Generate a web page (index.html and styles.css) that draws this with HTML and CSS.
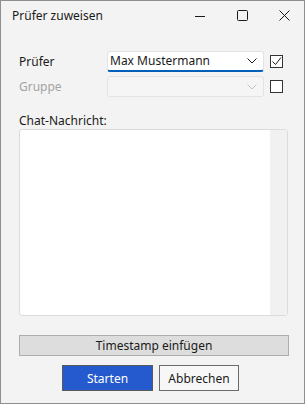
FILE: index.html
```html
<!DOCTYPE html>
<html lang="de">
<head>
    <meta charset="UTF-8">
    <meta name="viewport" content="width=device-width, initial-scale=1.0">
    <title>Prüfer zuweisen</title>
    <link rel="stylesheet" href="styles.css">
</head>
<body>

<div class="window">

    <!-- Titelleiste -->
    <div class="titlebar">
        <span class="title">Prüfer zuweisen</span>
        <div class="controls">
            <span class="ctrl">
                <svg width="10" height="10" viewBox="0 0 10 10"><path d="M0 5.5h10" stroke="#1a1a1a" stroke-width="1"/></svg>
            </span>
            <span class="ctrl">
                <svg width="11" height="11" viewBox="0 0 11 11"><rect x="0.5" y="0.5" width="10" height="10" rx="1" fill="none" stroke="#1a1a1a" stroke-width="1"/></svg>
            </span>
            <span class="ctrl">
                <svg width="11" height="11" viewBox="0 0 11 11"><path d="M0.5 0.5l10 10M10.5 0.5l-10 10" stroke="#1a1a1a" stroke-width="1"/></svg>
            </span>
        </div>
    </div>

    <div class="content">

        <div class="formgrid">
            <label class="label">Prüfer</label>
            <div class="combo">
                <span class="comboText">Max Mustermann</span>
                <svg class="chevron" width="10" height="6" viewBox="0 0 10 6"><path d="M0.5 0.5l4.5 4.5 4.5-4.5" fill="none" stroke="#1a1a1a" stroke-width="1"/></svg>
            </div>
            <span class="check checked">
                <svg width="11" height="11" viewBox="0 0 11 11"><path d="M1.5 5.5l3 3 5.5-7" fill="none" stroke="#1a1a1a" stroke-width="1"/></svg>
            </span>

            <label class="label disabled">Gruppe</label>
            <div class="combo comboDisabled">
                <span class="comboText"></span>
                <svg class="chevron" width="10" height="6" viewBox="0 0 10 6"><path d="M0.5 0.5l4.5 4.5 4.5-4.5" fill="none" stroke="#c4c4c4" stroke-width="1"/></svg>
            </div>
            <span class="check"></span>
        </div>

        <label class="chatLabel">Chat-Nachricht:</label>
        <div class="chatBox">
            <div class="chatText"></div>
            <div class="scrollbar"></div>
        </div>

        <button class="timestampBtn">Timestamp einfügen</button>

        <div class="actions">
            <button class="btn primary">Starten</button>
            <button class="btn">Abbrechen</button>
        </div>

    </div>
</div>

</body>
</html>
```

FILE: styles.css
```css
body {
    margin: 0;
    font-family: "Noto Sans", "Open Sans", sans-serif;
    font-size: 12px;
    color: #1a1a1a;
}

.window {
    width: 305px;
    height: 404px;
    box-sizing: border-box;
    border: 1px solid #8f8f8f;
    background-color: #f3f3f3;
    display: flex;
    flex-direction: column;
}

/* Titelleiste */
.titlebar {
    height: 29px;
    display: flex;
    align-items: center;
    justify-content: space-between;
}

.title {
    padding-left: 11px;
    font-size: 12px;
}

.controls {
    display: flex;
    height: 100%;
}

.ctrl {
    width: 42px;
    display: flex;
    align-items: center;
    justify-content: center;
}

.ctrl:last-child {
    margin-right: -1px;
}

/* Inhalt */
.content {
    flex: 1;
    display: flex;
    flex-direction: column;
    padding: 21px 16px 12px 18px;
}

.formgrid {
    display: grid;
    grid-template-columns: 82px 157px 13px;
    column-gap: 6px;
    row-gap: 4px;
    align-items: center;
}

.label {
    line-height: 21px;
}

.label.disabled {
    color: #a3a3a3;
}

.combo {
    height: 21px;
    box-sizing: border-box;
    background-color: #ffffff;
    border: 1px solid #e3e3e3;
    border-bottom: 2px solid #005fb8;
    border-radius: 3px;
    display: flex;
    align-items: center;
    justify-content: space-between;
    padding: 0 6px 0 2px;
}

.comboDisabled {
    background-color: #f5f5f5;
    border-bottom: 1px solid #e3e3e3;
}

.comboText {
    line-height: 18px;
}

.check {
    width: 13px;
    height: 13px;
    box-sizing: border-box;
    border: 1px solid #333333;
    background-color: #ffffff;
    display: flex;
    align-items: center;
    justify-content: center;
}

.chatLabel {
    margin-top: 15px;
    line-height: 17px;
}

.chatBox {
    height: 187px;
    box-sizing: border-box;
    border: 1px solid #dcdcdc;
    border-radius: 3px;
    background-color: #ffffff;
    display: flex;
}

.chatText {
    flex: 1;
}

.scrollbar {
    width: 17px;
    background-color: #f1f1f1;
}

.timestampBtn {
    margin-top: 19px;
    height: 21px;
    margin-right: -1px;
    border: 1px solid #adadad;
    background-color: #dddddd;
    font-family: inherit;
    font-size: 12px;
    color: #1a1a1a;
    padding: 0;
}

.actions {
    margin-top: 9px;
    display: flex;
    justify-content: center;
    gap: 6px;
    padding-right: 6px;
}

.btn {
    width: 80px;
    height: 26px;
    border: 1px solid #6b6b6b;
    background-color: #f7f7f7;
    font-family: inherit;
    font-size: 12px;
    color: #1a1a1a;
    padding: 0;
}

.btn.primary {
    width: 91px;
    background-color: #245ace;
    border-color: #5a5a5a;
    color: #ffffff;
}
```
